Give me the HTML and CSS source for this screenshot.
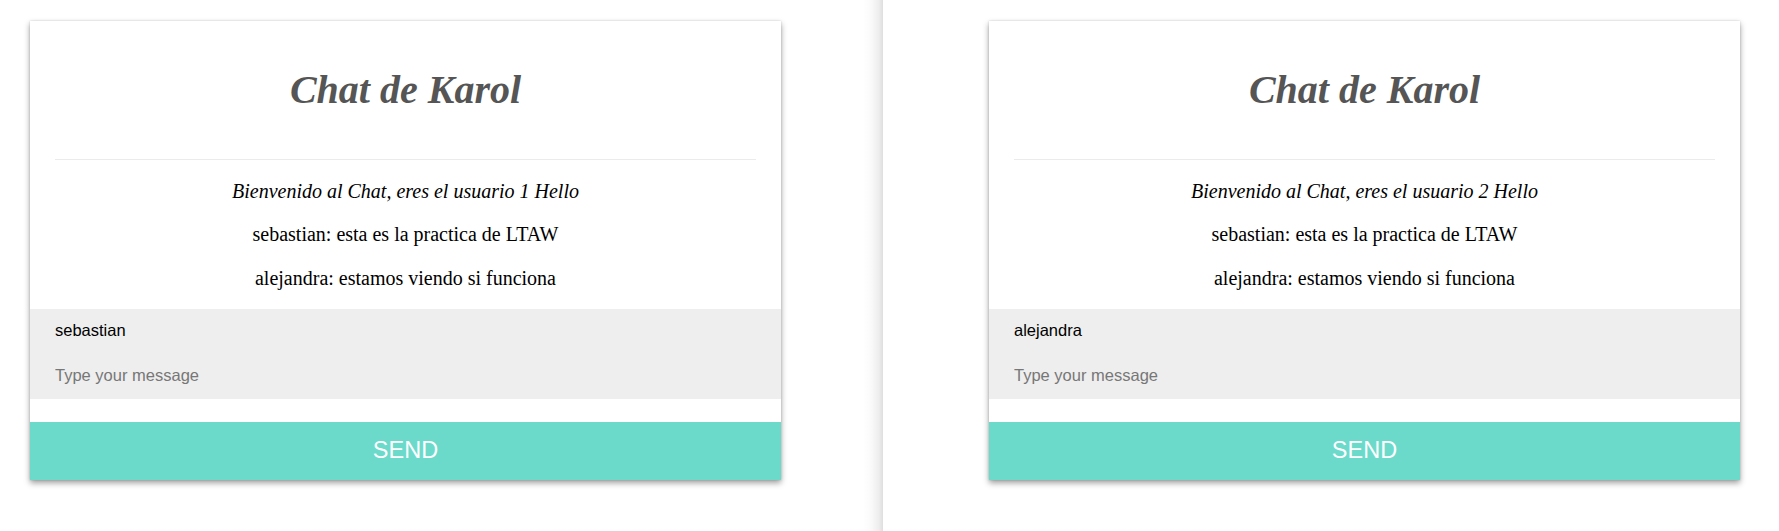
FILE: index.html
```html
<!DOCTYPE html>
<html lang="es">
<head>
<meta charset="utf-8">
<title>Chat de Karol</title>
<link rel="stylesheet" href="styles.css">
</head>
<body>
<div class="screen">
  <div class="pane pane-left">
    <div class="card">
      <div class="header"><h1 class="title">Chat de Karol</h1></div>
      <div class="messages">
        <p class="msg msg-welcome">Bienvenido al Chat, eres el usuario 1 Hello</p>
        <p class="msg">sebastian: esta es la practica de LTAW</p>
        <p class="msg">alejandra: estamos viendo si funciona</p>
      </div>
      <div class="form">
        <input class="field" type="text" value="sebastian">
        <input class="field" type="text" placeholder="Type your message">
      </div>
      <button class="send">SEND</button>
    </div>
  </div>
  <div class="divider"></div>
  <div class="pane pane-right">
    <div class="card">
      <div class="header"><h1 class="title">Chat de Karol</h1></div>
      <div class="messages">
        <p class="msg msg-welcome">Bienvenido al Chat, eres el usuario 2 Hello</p>
        <p class="msg">sebastian: esta es la practica de LTAW</p>
        <p class="msg">alejandra: estamos viendo si funciona</p>
      </div>
      <div class="form">
        <input class="field" type="text" value="alejandra">
        <input class="field" type="text" placeholder="Type your message">
      </div>
      <button class="send">SEND</button>
    </div>
  </div>
</div>
</body>
</html>
```

FILE: styles.css
```css
html, body {
  margin: 0;
  padding: 0;
  background: #fff;
}

.screen {
  display: flex;
  width: 1779px;
  height: 531px;
  overflow: hidden;
}

.pane {
  padding-top: 21px;
  box-sizing: border-box;
  height: 531px;
}

.pane-left {
  width: 863px;
  padding-left: 30px;
}

.divider {
  width: 20px;
  height: 531px;
  background: linear-gradient(to right, rgba(0,0,0,0) 0%, rgba(0,0,0,0.02) 40%, rgba(0,0,0,0.07) 80%, rgba(0,0,0,0.13) 100%);
}

.pane-right {
  flex: 1;
  padding-left: 106px;
}

.card {
  width: 751px;
  background: #fff;
  box-shadow: 0 3px 6px rgba(0,0,0,0.38), 0 0 2px rgba(0,0,0,0.15);
  font-family: "Liberation Serif", "Times New Roman", serif;
}

.header {
  margin: 0 25px;
  padding: 46px 0;
  border-bottom: 1px solid #ebebeb;
}

.title {
  margin: 0;
  text-align: center;
  font-size: 40px;
  line-height: 46px;
  font-weight: bold;
  font-style: italic;
  color: #555;
}

.messages {
  padding: 10px 0 9px;
}

.msg {
  margin: 0;
  text-align: center;
  font-size: 20px;
  line-height: 43.33px;
  color: #000;
}

.msg-welcome {
  font-style: italic;
}

.form {
  background: #eee;
  display: flex;
  flex-direction: column;
}

.field {
  height: 45px;
  box-sizing: border-box;
  border: 0;
  outline: 0;
  background: transparent;
  padding: 0 25px 1px;
  margin: 0;
  font-family: "Liberation Sans", Arial, sans-serif;
  font-size: 16.5px;
  color: #000;
}

.field::placeholder {
  color: #777;
}

.send {
  display: block;
  width: 100%;
  height: 58px;
  margin-top: 23px;
  border: 0;
  padding: 0;
  background: #6bdacb;
  color: #fff;
  font-family: "Liberation Sans", Arial, sans-serif;
  font-size: 23.5px;
}
```
